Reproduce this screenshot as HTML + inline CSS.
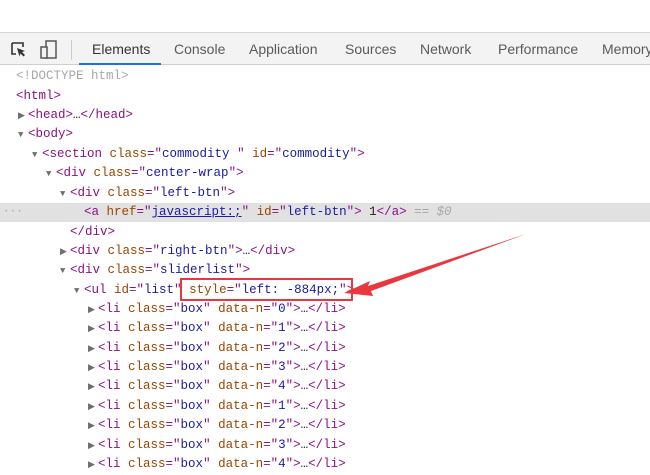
<!DOCTYPE html>
<html><head><meta charset="utf-8"><style>
*{margin:0;padding:0;box-sizing:border-box}
body{width:650px;height:467px;overflow:hidden;background:#fff;position:relative;font-family:"Liberation Mono",monospace}
.bar{position:absolute;left:0;top:32px;width:650px;height:33px;background:#f3f3f3;border-top:1px solid #d6d6d6;border-bottom:1px solid #cfcfcf;font-family:"Liberation Sans",sans-serif;font-size:14px;color:#5a5a5a}
.tab{position:absolute;top:8px}
.ul{position:absolute;left:79px;top:30px;width:82px;height:2px;background:#1a73e8}
.sep{position:absolute;left:71px;top:7px;width:1px;height:20px;background:#ccc}
.l{position:absolute;font-size:12.5px;line-height:19px;white-space:pre;color:#881280}
.a{color:#994500}.v{color:#1a1aa6}.g{color:#a8a8a8}.k{color:#222}
.t{color:#6e6e6e;font-size:9px;display:inline-block;width:10px}
.hl{position:absolute;left:0;top:203px;width:650px;height:19px;background:#e1e1e1}
</style></head><body>
<div class="bar">
<svg style="position:absolute;left:10px;top:8px" width="18" height="18" viewBox="0 0 18 18"><path d="M2 2h11v4M2 2v11h4" fill="none" stroke="#333" stroke-width="1.6"/><path d="M7 7l8 3-3 1 3 3-1.5 1.5-3-3-1 3z" fill="#333"/></svg>
<svg style="position:absolute;left:40px;top:7px" width="18" height="20" viewBox="0 0 18 20"><rect x="6" y="1" width="10" height="17" fill="none" stroke="#555" stroke-width="1.5"/><rect x="1" y="7" width="6" height="11" fill="#f3f3f3" stroke="#555" stroke-width="1.5"/></svg>
<div class="sep"></div>
<span class="tab" style="left:92px;color:#333">Elements</span>
<span class="tab" style="left:174px">Console</span>
<span class="tab" style="left:249px">Application</span>
<span class="tab" style="left:345px">Sources</span>
<span class="tab" style="left:420px">Network</span>
<span class="tab" style="left:498px">Performance</span>
<span class="tab" style="left:602px">Memory</span>
<div class="ul"></div>
</div>
<div class="hl"></div>
<div class="l g" style="left:3px;top:203px;font-size:11px">···</div>
<div class="l g" style="left:16px;top:67px">&lt;!DOCTYPE html&gt;</div>
<div class="l" style="left:16px;top:87px">&lt;html&gt;</div>
<div class="l" style="left:18px;top:106px"><span class="t">▶</span>&lt;head&gt;<span class="k">…</span>&lt;/head&gt;</div>
<div class="l" style="left:18px;top:125px"><span class="t">▼</span>&lt;body&gt;</div>
<div class="l" style="left:32px;top:145px"><span class="t">▼</span>&lt;section <span class="a">class</span>="<span class="v">commodity </span>" <span class="a">id</span>="<span class="v">commodity</span>"&gt;</div>
<div class="l" style="left:46px;top:164px"><span class="t">▼</span>&lt;div <span class="a">class</span>="<span class="v">center-wrap</span>"&gt;</div>
<div class="l" style="left:60px;top:184px"><span class="t">▼</span>&lt;div <span class="a">class</span>="<span class="v">left-btn</span>"&gt;</div>
<div class="l" style="left:84px;top:203px">&lt;a <span class="a">href</span>="<span class="v" style="text-decoration:underline">javascript:;</span>" <span class="a">id</span>="<span class="v">left-btn</span>"&gt;<span class="k"> 1</span>&lt;/a&gt; <span class="g" style="font-style:italic">== $0</span></div>
<div class="l" style="left:70px;top:223px">&lt;/div&gt;</div>
<div class="l" style="left:60px;top:242px"><span class="t">▶</span>&lt;div <span class="a">class</span>="<span class="v">right-btn</span>"&gt;<span class="k">…</span>&lt;/div&gt;</div>
<div class="l" style="left:60px;top:261px"><span class="t">▼</span>&lt;div <span class="a">class</span>="<span class="v">sliderlist</span>"&gt;</div>
<div class="l" style="left:74px;top:281px"><span class="t">▼</span>&lt;ul <span class="a">id</span>="<span class="v">list</span>" <span class="a">style</span>="<span class="v">left: -884px;</span>"&gt;</div>
<div class="l" style="left:88px;top:300px"><span class="t">▶</span>&lt;li <span class="a">class</span>="<span class="v">box</span>" <span class="a">data-n</span>="<span class="v">0</span>"&gt;<span class="k">…</span>&lt;/li&gt;</div>
<div class="l" style="left:88px;top:319px"><span class="t">▶</span>&lt;li <span class="a">class</span>="<span class="v">box</span>" <span class="a">data-n</span>="<span class="v">1</span>"&gt;<span class="k">…</span>&lt;/li&gt;</div>
<div class="l" style="left:88px;top:339px"><span class="t">▶</span>&lt;li <span class="a">class</span>="<span class="v">box</span>" <span class="a">data-n</span>="<span class="v">2</span>"&gt;<span class="k">…</span>&lt;/li&gt;</div>
<div class="l" style="left:88px;top:358px"><span class="t">▶</span>&lt;li <span class="a">class</span>="<span class="v">box</span>" <span class="a">data-n</span>="<span class="v">3</span>"&gt;<span class="k">…</span>&lt;/li&gt;</div>
<div class="l" style="left:88px;top:377px"><span class="t">▶</span>&lt;li <span class="a">class</span>="<span class="v">box</span>" <span class="a">data-n</span>="<span class="v">4</span>"&gt;<span class="k">…</span>&lt;/li&gt;</div>
<div class="l" style="left:88px;top:397px"><span class="t">▶</span>&lt;li <span class="a">class</span>="<span class="v">box</span>" <span class="a">data-n</span>="<span class="v">1</span>"&gt;<span class="k">…</span>&lt;/li&gt;</div>
<div class="l" style="left:88px;top:416px"><span class="t">▶</span>&lt;li <span class="a">class</span>="<span class="v">box</span>" <span class="a">data-n</span>="<span class="v">2</span>"&gt;<span class="k">…</span>&lt;/li&gt;</div>
<div class="l" style="left:88px;top:436px"><span class="t">▶</span>&lt;li <span class="a">class</span>="<span class="v">box</span>" <span class="a">data-n</span>="<span class="v">3</span>"&gt;<span class="k">…</span>&lt;/li&gt;</div>
<div class="l" style="left:88px;top:455px"><span class="t">▶</span>&lt;li <span class="a">class</span>="<span class="v">box</span>" <span class="a">data-n</span>="<span class="v">4</span>"&gt;<span class="k">…</span>&lt;/li&gt;</div>
<div style="position:absolute;left:180px;top:278px;width:173px;height:23px;border:2px solid #e8383d"></div>
<svg style="position:absolute;left:0;top:0" width="650" height="467"><path d="M526 234 L368 286 L370 281 L344 293 L373 296 L371 291 Z" fill="#e8383d"/></svg>
</body></html>
